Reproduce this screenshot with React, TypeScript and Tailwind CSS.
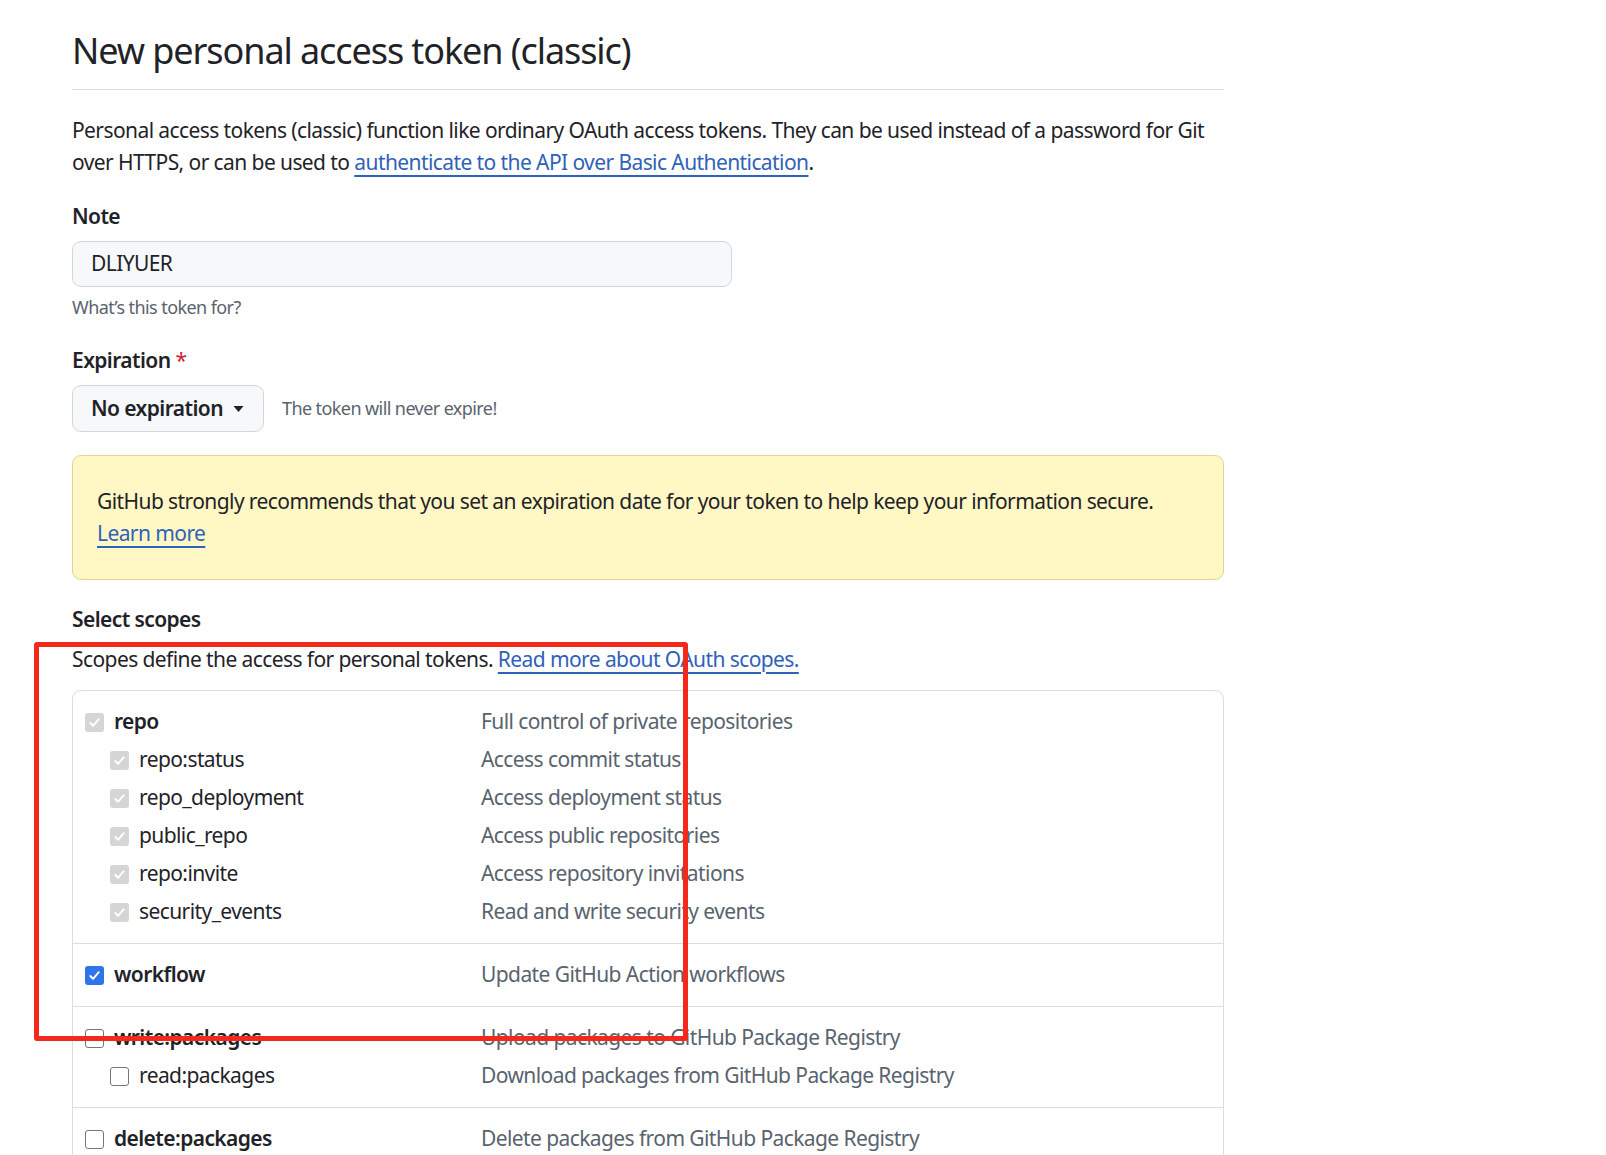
import React from "react"

type Scope = { name: string; desc: string; sub?: boolean; state: "locked" | "on" | "off"; bold?: boolean }

const groups: Scope[][] = [
  [
    { name: "repo", desc: "Full control of private repositories", state: "locked", bold: true },
    { name: "repo:status", desc: "Access commit status", state: "locked", sub: true },
    { name: "repo_deployment", desc: "Access deployment status", state: "locked", sub: true },
    { name: "public_repo", desc: "Access public repositories", state: "locked", sub: true },
    { name: "repo:invite", desc: "Access repository invitations", state: "locked", sub: true },
    { name: "security_events", desc: "Read and write security events", state: "locked", sub: true },
  ],
  [{ name: "workflow", desc: "Update GitHub Action workflows", state: "on", bold: true }],
  [
    { name: "write:packages", desc: "Upload packages to GitHub Package Registry", state: "off", bold: true },
    { name: "read:packages", desc: "Download packages from GitHub Package Registry", state: "off", sub: true },
  ],
  [{ name: "delete:packages", desc: "Delete packages from GitHub Package Registry", state: "off", bold: true }],
]

function Box({ state }: { state: Scope["state"] }) {
  if (state === "off") {
    return <span className="w-[19px] h-[19px] rounded-[3px] border-[1.5px] border-[#767676] bg-white shrink-0" />
  }
  return (
    <span
      className={`w-[19px] h-[19px] rounded-[3px] shrink-0 flex items-center justify-center ${
        state === "on" ? "bg-[#2f74e8]" : "bg-[#d5d5d5]"
      }`}
    >
      <svg viewBox="0 0 16 16" className="w-[15px] h-[15px]" fill="none">
        <path d="M3.5 8.5l3 3 6-7" stroke="white" strokeWidth="2" strokeLinecap="round" strokeLinejoin="round" />
      </svg>
    </span>
  )
}

export default function App() {
  return (
    <div className="relative min-h-screen bg-white text-[#1f2328] font-['Noto_Sans',sans-serif] text-[21px] leading-[31.5px] tracking-[-0.028em]">
      <div className="ml-[72px] w-[1152px] pt-[24px]">
        <div className="border-b border-[#d8dee4] pb-[11px]">
          <h1 className="text-[36px] leading-[54px] font-normal tracking-[-0.03em]">New personal access token (classic)</h1>
        </div>

        <p className="mt-[25px]">
          Personal access tokens (classic) function like ordinary OAuth access tokens. They can be used instead of a password for Git
          <br />
          over HTTPS, or can be used to{" "}
          <a className="text-[#2f62b8] underline underline-offset-[5px] decoration-2">authenticate to the API over Basic Authentication</a>.
        </p>

        <div className="mt-[23px] font-semibold">Note</div>
        <div className="mt-[8px] w-[660px] h-[46px] rounded-[9px] border border-[#d0d7de] bg-[#f6f8fa] px-[18px] flex items-center">
          DLIYUER
        </div>
        <div className="mt-[7px] text-[18px] leading-[27px] text-[#59636e]">What’s this token for?</div>

        <div className="mt-[24px] font-semibold">
          Expiration <span className="text-[#d1242f] font-normal">*</span>
        </div>
        <div className="mt-[9px] flex items-center gap-[18px]">
          <div className="h-[47px] w-[192px] rounded-[9px] border border-[#d0d7de] bg-[#f6f8fa] pl-[18px] pr-[19px] flex items-center justify-between font-semibold">
            <span>No expiration</span>
            <svg viewBox="0 0 10 6" className="w-[11px] h-[6px]">
              <path d="M0 0h10L5 6z" fill="#1f2328" />
            </svg>
          </div>
          <span className="text-[18px] text-[#59636e]">The token will never expire!</span>
        </div>

        <div className="mt-[23px] rounded-[9px] border border-[#e6d58f] bg-[#fff8c5] px-[24px] py-[30px]">
          GitHub strongly recommends that you set an expiration date for your token to help keep your information secure.
          <br />
          <a className="text-[#2f62b8] underline underline-offset-[5px] decoration-2">Learn more</a>
        </div>

        <div className="mt-[24px] font-semibold">Select scopes</div>
        <p className="mt-[8px]">
          Scopes define the access for personal tokens.{" "}
          <a className="text-[#2f62b8] underline underline-offset-[5px] decoration-2">Read more about OAuth scopes.</a>
        </p>

        <div className="mt-[15px] rounded-[9px] border border-[#d8dee4] overflow-hidden">
          {groups.map((g, gi) => (
            <div key={gi} className={`py-[12px] px-[12px] ${gi > 0 ? "border-t border-[#d8dee4]" : ""}`}>
              {g.map((s) => (
                <div key={s.name} className="h-[38px] grid grid-cols-[396px_1fr] items-center">
                  <div className={`flex items-center gap-[10px] ${s.sub ? "pl-[25px]" : ""}`}>
                    <Box state={s.state} />
                    <span className={s.bold ? "font-semibold" : ""}>{s.name}</span>
                  </div>
                  <div className="text-[#59636e]">{s.desc}</div>
                </div>
              ))}
            </div>
          ))}
        </div>
      </div>

      <div className="absolute left-[34px] top-[642px] w-[654px] h-[399px] border-[5px] border-[#f5281c] rounded-[3px] pointer-events-none" />
    </div>
  )
}
